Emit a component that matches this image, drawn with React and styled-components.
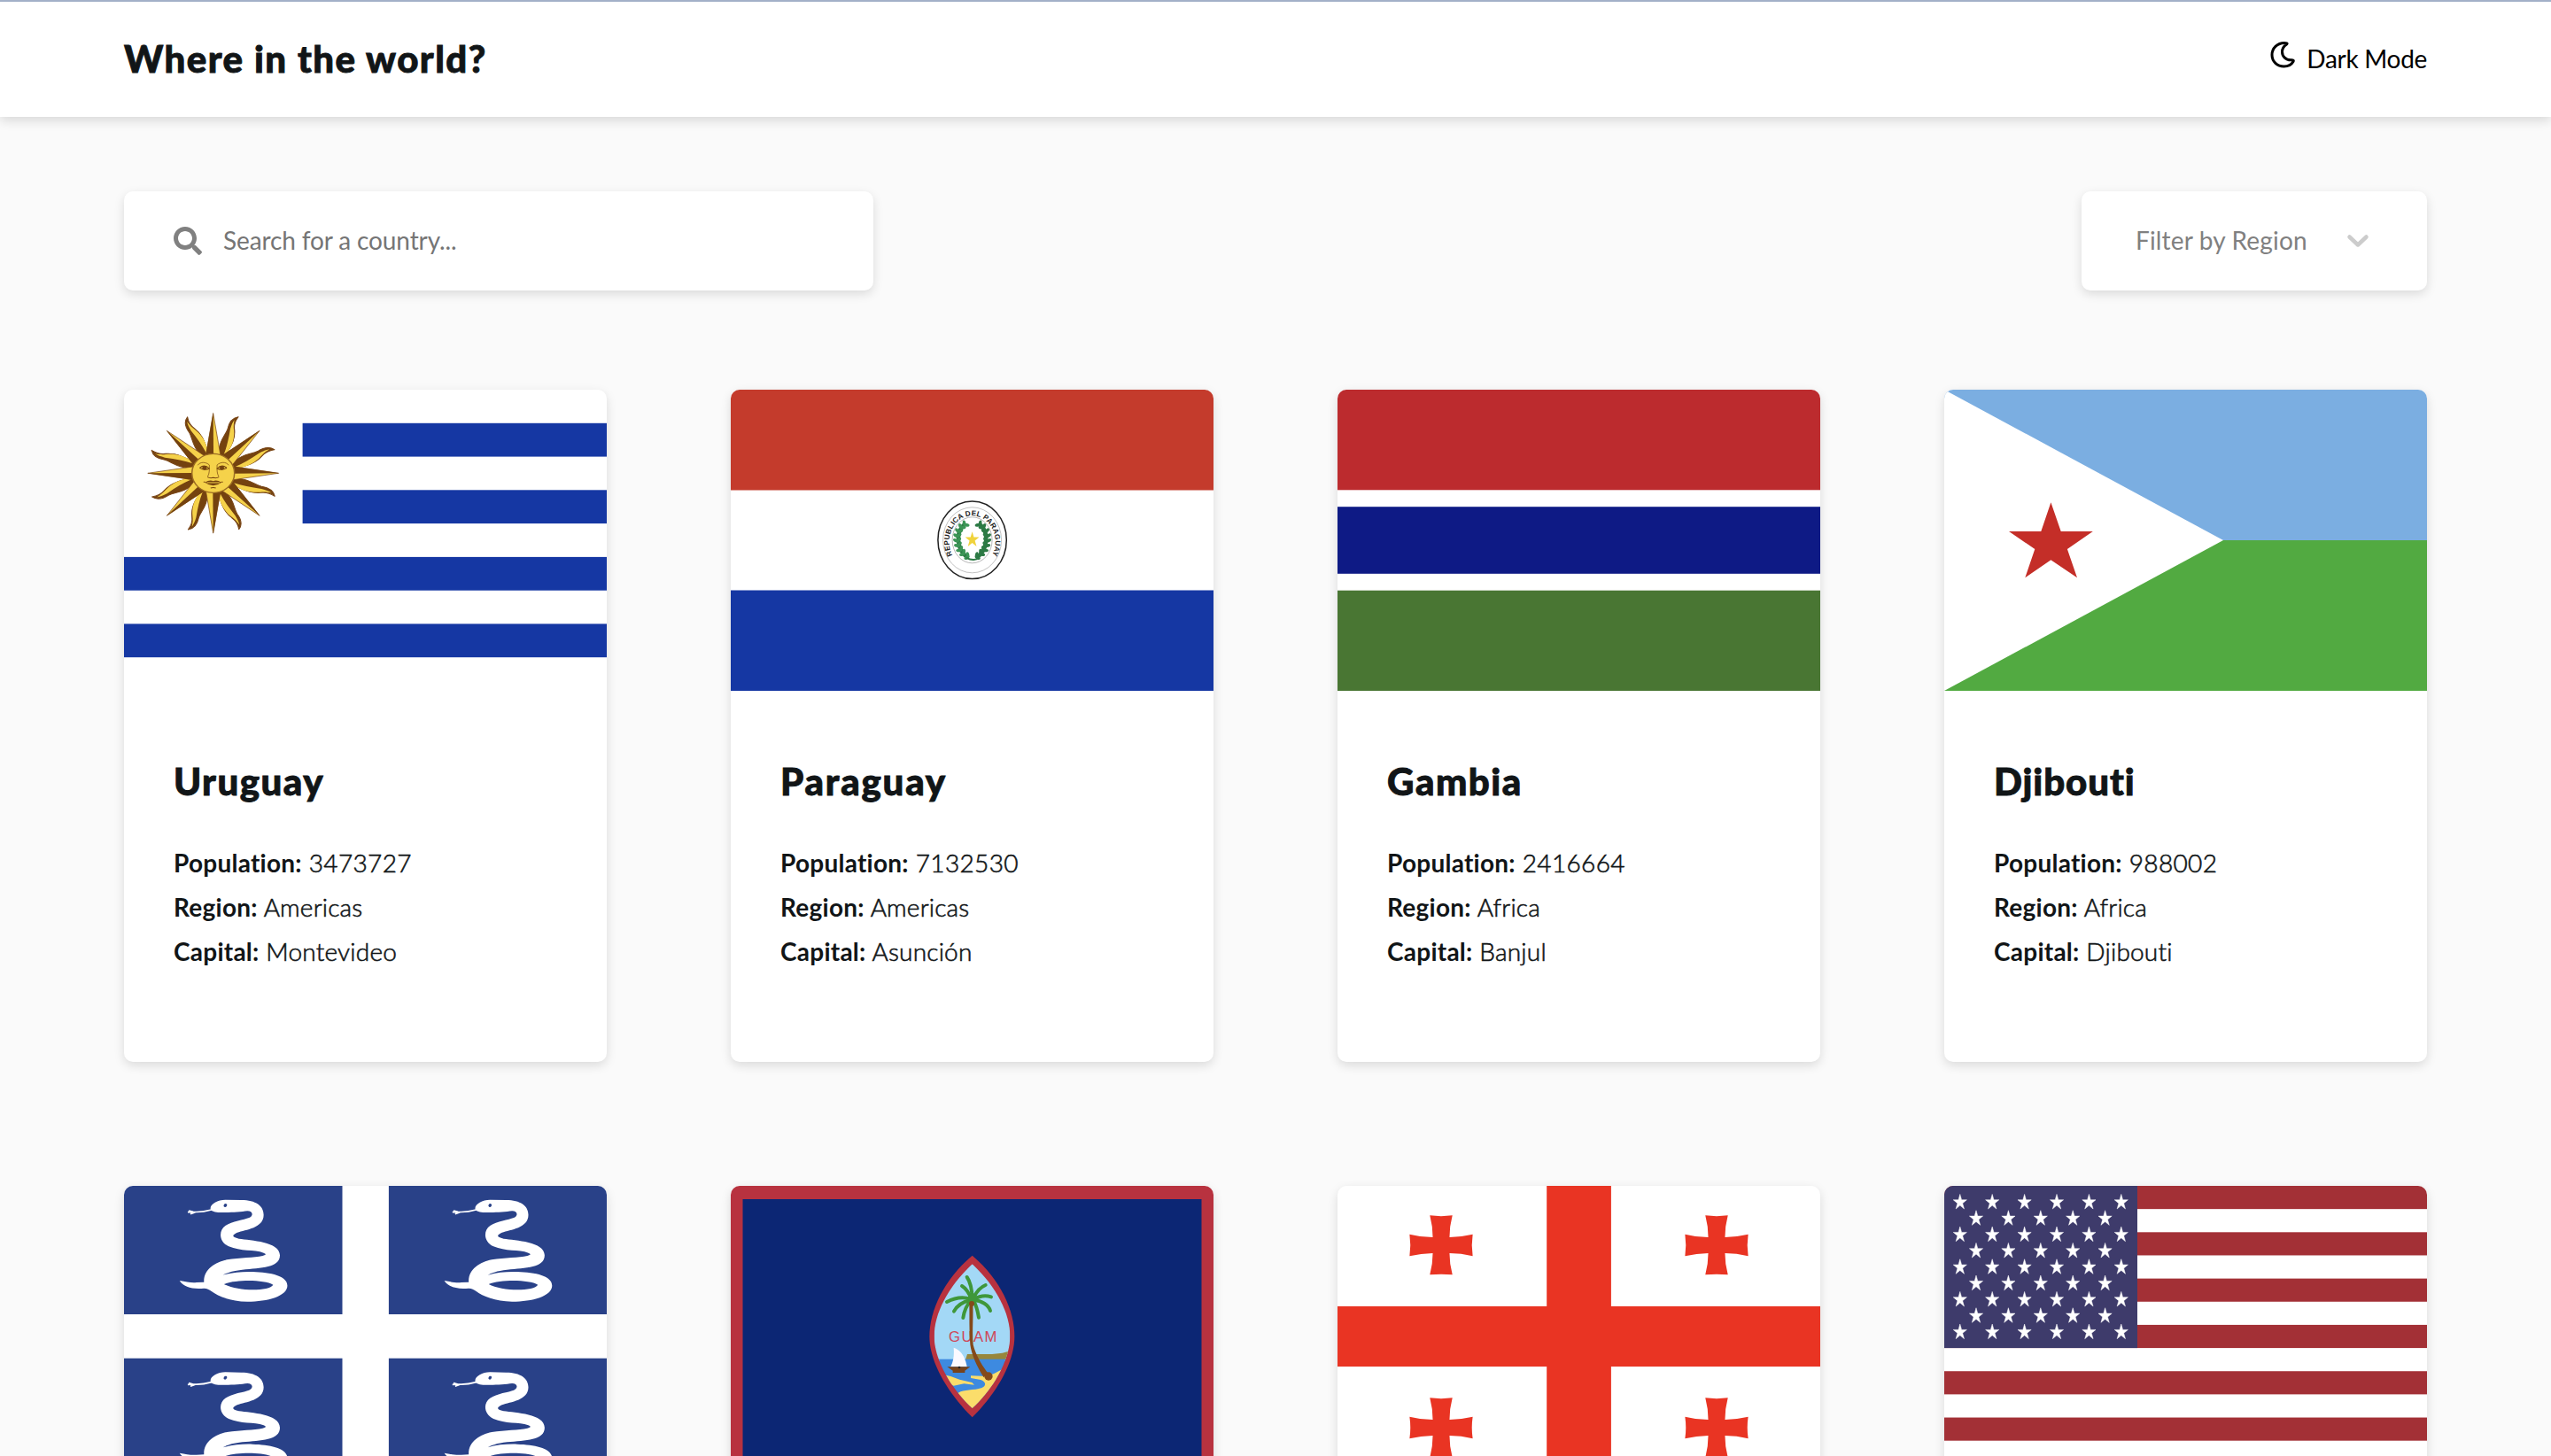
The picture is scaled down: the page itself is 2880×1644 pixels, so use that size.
import React from "react";
import styled, { createGlobalStyle } from "styled-components";
import { FaSearch } from "react-icons/fa";

const GlobalStyle = createGlobalStyle`
  * { box-sizing: border-box; }
  body {
    margin: 0;
    height: 1644px;
    overflow: hidden;
    background: #fafafa;
    color: #111517;
    font-family: Lato, "Open Sans", sans-serif;
    font-size: 28px;
    font-variant-ligatures: none;
  }
`;

const shadow = "0 4px 12px rgba(0, 0, 0, 0.13)";

const Page = styled.div`
  height: 1644px;
  overflow: hidden;
`;

const Header = styled.header`
  display: flex;
  align-items: center;
  justify-content: space-between;
  height: 132px;
  padding: 0 140px 2px;
  background: #fff;
  border-top: 2px solid #a3b0c8;
  box-shadow: 0 4px 12px rgba(0, 0, 0, 0.14);
`;

const Title = styled.h1`
  margin: 0;
  font-size: 42px;
  line-height: 56px;
  font-weight: 900;
  letter-spacing: 1.45px;
  -webkit-text-stroke: 0.9px currentColor;
  white-space: nowrap;
`;

const ThemeToggle = styled.button`
  display: flex;
  align-items: center;
  gap: 14px;
  padding: 0;
  border: 0;
  background: none;
  color: #000;
  font: inherit;
  line-height: 38px;
  letter-spacing: -0.3px;
`;

const MoonIcon = styled.svg`
  width: 28px;
  height: 30px;
  margin: 0 -1px 8px 1px;
`;

const Main = styled.main`
  padding: 84px 140px 0;
`;

const Toolbar = styled.div`
  display: flex;
  justify-content: space-between;
  margin-bottom: 112px;
`;

const Field = styled.div`
  display: flex;
  align-items: center;
  height: 112px;
  background: #fff;
  border-radius: 10px;
  box-shadow: ${shadow};
`;

const SearchField = styled(Field)`
  width: 846px;
  padding-left: 56px;
  gap: 24px;
  color: #808080;
`;

const SearchInput = styled.input`
  flex: 1;
  padding: 0 0 2px;
  border: 0;
  outline: 0;
  background: none;
  font: inherit;
  letter-spacing: -0.12px;
  &::placeholder { color: #757575; opacity: 1; }
`;

const RegionSelect = styled(Field)`
  width: 390px;
  padding: 0 65px 0 61px;
  justify-content: space-between;
  color: #808080;
  letter-spacing: 0.17px;
  white-space: nowrap;
`;

const RegionLabel = styled.span`
  padding-bottom: 2px;
`;

const Chevron = styled.svg`
  width: 26px;
  height: 16px;
`;

const Grid = styled.div`
  display: grid;
  grid-template-columns: repeat(4, 545px);
  gap: 140px;
`;

const Card = styled.article`
  height: 759px;
  background: #fff;
  border-radius: 10px;
  box-shadow: ${shadow};
  overflow: hidden;
`;

const Flag = styled.svg`
  display: block;
  width: 545px;
  height: 340px;
`;

const Details = styled.div`
  padding: 73px 56px 0;
`;

const Name = styled.h2`
  margin: 0 0 38px;
  font-size: 42px;
  line-height: 58px;
  font-weight: 900;
  letter-spacing: ${(p) => p.$tracking}px;
  -webkit-text-stroke: 0.9px currentColor;
`;

const Fact = styled.p`
  margin: 0;
  font-size: 28px;
  line-height: 50px;
  font-weight: 300;
  letter-spacing: ${(p) => (p.$numeric ? 0.35 : 0.2)}px;
  -webkit-text-stroke: 0.6px currentColor;
`;

const Label = styled.span`
  font-weight: 700;
  letter-spacing: 0.25px;
  -webkit-text-stroke: 0;
`;

const starPoints = (cx, cy, rx, ry) =>
  Array.from({ length: 10 }, (_, i) => {
    const a = (Math.PI / 5) * i - Math.PI / 2;
    const k = i % 2 ? 0.382 : 1;
    return `${(cx + rx * k * Math.cos(a)).toFixed(2)},${(cy + ry * k * Math.sin(a)).toFixed(2)}`;
  }).join(" ");

const turns = [0, 45, 90, 135, 180, 225, 270, 315];

function Uruguay() {
  return (
    <Flag viewBox="0 0 545 340">
      <g fill="#1537a3">
        <rect x="201.6" y="37.8" width="343.4" height="37.8" />
        <rect x="201.6" y="113.3" width="343.4" height="37.8" />
        <rect y="188.9" width="545" height="37.8" />
        <rect y="264.4" width="545" height="37.8" />
      </g>
      <g transform="translate(100.7 94.3) scale(.3636 .3333)">
        {turns.map((t) => (
          <g key={t} transform={`rotate(${t})`} stroke="#7a4617" strokeWidth="3" strokeLinejoin="round">
            <path fill="#74420f" d="M17-62C16-108 38-128 45-150C49-172 60-188 78-191C67-176 64-163 66-148C69-120 61-94 34-58Z" />
            <path fill="#f5d24a" stroke="none" d="M33-64C42-88 48-116 53-150C57-164 60-172 66-181C63-166 63-156 64-147C67-118 60-92 42-66Z" />
          </g>
        ))}
        {turns.map((t) => (
          <g key={t} transform={`rotate(${t})`}>
            <path fill="#f5d24a" stroke="#7a4617" strokeWidth="2" d="M0-203L23-58H-23Z" />
            <path fill="#74420f" d="M0-207L1-58H-24Z" />
          </g>
        ))}
        <circle r="66" fill="#f5d24a" stroke="#9a6a22" strokeWidth="4" />
        <g fill="none" stroke="#74420f" strokeWidth="3">
          <path d="M-48-27C-40-40-22-38-12-28C-12-12-11 0-17 11M48-27C40-40 22-38 12-28C12-12 11 0 17 11" strokeWidth="2" />
          <path d="M-42-18Q-27-32-12-16Q-27-8-42-18M42-18Q27-32 12-16Q27-8 42-18M-18 13Q-10 18 0 15Q10 18 18 13" />
          <path d="M-30 30H-25M30 30H25M-8 50Q0 47 8 50" />
        </g>
        <path fill="#74420f" d="M-26 31Q-10 21 0 27Q10 21 26 31Q0 52-26 31" />
        <path stroke="#f5d24a" strokeWidth="3" d="M-20 32H20" />
        <circle cx="-27" cy="-18" r="7" fill="#74420f" />
        <circle cx="27" cy="-18" r="7" fill="#74420f" />
      </g>
    </Flag>
  );
}

const leaves = [
  [-26, -52, 45], [-38, -42, 30], [-47, -28, 15], [-51, -12, 0], [-51, 4, -8],
  [-47, 20, -20], [-40, 35, -35], [-29, 47, -50], [-14, 57, -65],
];

function Paraguay() {
  return (
    <Flag viewBox="0 0 545 340">
      <rect width="545" height="113.5" fill="#c43b2c" />
      <rect y="226.5" width="545" height="113.5" fill="#1537a3" />
      <g transform="translate(272.6 169.8)">
        <ellipse rx="38.7" ry="43.8" fill="#fff" stroke="#222" strokeWidth="1.5" />
        <ellipse rx="33" ry="37" fill="none" stroke="#999" strokeWidth=".6" />
        <ellipse rx="22.5" ry="26" fill="none" stroke="#999" strokeWidth=".7" />
        <path id="motto" d="M-22.3 17A26 29.5 0 1 1 22.3 17" fill="none" />
        <text fontFamily="Liberation Sans, sans-serif" fontWeight="700" fontSize="8.2" fill="#222">
          <textPath href="#motto" textLength="118" lengthAdjust="spacing">REPUBLICA DEL PARAGUAY</textPath>
        </text>
        <g transform="scale(.3333)">
          {[1, -1].map((s) => (
            <g key={s} transform={`scale(${s} 1)`}>
              <path d="M-25-54C-56-30-56 30-15 60" fill="none" stroke="#2d7a45" strokeWidth="14" />
              {leaves.map(([x, y, r]) => (
                <g key={y} transform={`translate(${x} ${y}) rotate(${r})`} fill={s > 0 ? "#3c9556" : "#2d7a45"}>
                  <ellipse cx="-5" rx="10" ry="5.5" transform="rotate(35)" />
                  <ellipse cx="7" rx="10" ry="5.5" transform="rotate(-35)" />
                </g>
              ))}
            </g>
          ))}
          <path d="M-20 60Q0 70 18 64" fill="none" stroke="#2d7a45" strokeWidth="6" />
          <polygon points={starPoints(0, -1, 25, 28)} fill="#f0d33c" />
        </g>
      </g>
    </Flag>
  );
}

function Gambia() {
  return (
    <Flag viewBox="0 0 545 340">
      <rect width="545" height="113.3" fill="#bc2b2e" />
      <rect y="132.2" width="545" height="75.6" fill="#0e1a85" />
      <rect y="226.7" width="545" height="113.3" fill="#497633" />
    </Flag>
  );
}

function Djibouti() {
  return (
    <Flag viewBox="0 0 545 340">
      <rect width="545" height="170" fill="#7baee1" />
      <rect y="170" width="545" height="170" fill="#52aa41" />
      <path fill="#fff" d="M0 0L315 170L0 340Z" />
      <polygon
        fill="#c42e28"
        points="120.4,127.3 131.7,160 167.8,160 138.9,180 150,212.3 120.4,192.3 91.3,212.3 102.3,180 73,160 109.3,160"
      />
    </Flag>
  );
}

function Snake({ x, y }) {
  return (
    <g transform={`translate(${x} ${y})`}>
      <path
        fill="#fff"
        fillRule="evenodd"
        d="M282 138C276 122 300 104 325 104L372 105C415 105 438 125 438 155C438 200 385 205 360 215C345 223 342 230 365 236C400 242 486 245 486 292C486 335 430 335 375 341C345 345 328 352 318 359C345 350 375 347 405 348C460 350 508 362 508 395C508 430 450 449 390 449C340 449 303 430 285 415C276 408 272 404 262 404C228 408 202 400 190 378C210 382 225 386 240 384L262 383C260 340 295 315 330 307C370 300 410 300 435 294C446 291 446 288 438 284C410 272 370 280 335 262C305 246 305 207 325 192C345 176 380 172 395 165C410 157 405 142 390 142C370 145 340 148 315 147C300 147 288 146 282 138ZM321 390C355 374 440 374 466 392C455 415 360 415 321 390Z"
      />
      <path fill="none" stroke="#fff" strokeWidth="5" d="M284 138C265 144 250 147 230 145L214 146M236 146L222 152M230 145L217 141" />
      <ellipse cx="325" cy="123" rx="4.5" ry="6" fill="#294188" transform="rotate(25 325 123)" />
    </g>
  );
}

function Martinique() {
  return (
    <Flag viewBox="0 0 545 340">
      <g fill="#294188">
        <rect width="246.5" height="145" />
        <rect x="298.9" width="246.1" height="145" />
        <rect y="194.7" width="246.5" height="145.3" />
        <rect x="298.9" y="194.7" width="246.1" height="145.3" />
      </g>
      <g transform="scale(.38265 .33333) translate(-26 -57)">
        <Snake x={0} y={0} />
        <Snake x={781} y={0} />
        <Snake x={0} y={584} />
        <Snake x={781} y={584} />
      </g>
    </Flag>
  );
}

function Guam() {
  return (
    <Flag viewBox="0 0 545 340">
      <rect width="545" height="340" fill="#b8323f" />
      <rect x="13.5" y="15" width="518" height="310" fill="#0c2674" />
      <g transform="translate(195 51) scale(.33333)">
        <clipPath id="seal">
          <path d="M233 112C316 190 361 280 361 357C361 430 310 530 233 600C156 530 104 430 104 357C104 280 150 190 233 112Z" />
        </clipPath>
        <path fill="#b8323f" d="M233 83C330 165 376 270 376 357C376 445 315 550 233 631C151 550 88 445 88 357C88 270 136 165 233 83Z" />
        <g clipPath="url(#seal)">
          <rect x="80" y="100" width="300" height="340" fill="#a3d8f6" />
          <path fill="#97863c" d="M210 436L216 417H300L335 413L365 405V436Z" />
          <rect x="80" y="434" width="300" height="180" fill="#3d8ae0" />
          <path fill="#fbdd6b" d="M375 440L335 468L308 482L285 492L228 490L228 498L262 504C284 512 280 530 255 534C225 540 195 538 180 552L170 620H300L390 500Z" />
          <path fill="#fbdd6b" d="M130 485L160 492L190 503L232 513L240 521L205 517L170 524L140 510Z" />
        </g>
        <text x="153" y="374" textLength="163" lengthAdjust="spacing" fontFamily="Liberation Sans, sans-serif" fontSize="50" fill="#cf4658">GUAM</text>
        <path fill="#fbf9ff" d="M170 395C195 402 210 430 215 459H160C170 440 172 420 170 395Z" />
        <path fill="#77431c" d="M148 460H226L208 473V480H167V473Z" />
        <circle cx="189" cy="462" r="4" fill="#222" />
        <path fill="#84491a" d="M223 240H235C237 300 232 345 236 385C246 425 270 460 285 480L272 496C250 460 232 425 226 385C222 340 224 290 223 240Z" />
        <circle cx="288" cy="492" r="14" fill="#84491a" />
        <g fill="none" stroke="#3f973a" strokeWidth="12" strokeLinecap="round">
          <path d="M233 230C232 195 225 170 215 156" />
          <path d="M230 230C220 205 208 192 198 186" />
          <path d="M238 225C250 200 265 188 278 183" />
          <path d="M238 232C260 218 280 218 297 223" />
          <path d="M238 234C265 236 288 250 294 270" />
          <path d="M238 238C248 255 252 275 255 293" />
          <path d="M228 236C210 255 205 275 202 294" />
          <path d="M226 234C200 240 180 255 171 272" />
          <path d="M226 230C195 220 170 228 147 240" />
        </g>
        <circle cx="234" cy="226" r="15" fill="#3f973a" />
        <circle cx="231" cy="246" r="9" fill="#84491a" />
      </g>
    </Flag>
  );
}

const crosses = [[117, 67], [428, 67], [117, 273], [428, 273]];

function Georgia() {
  return (
    <Flag viewBox="0 0 545 340">
      <g fill="#e93423">
        <rect x="236.2" width="72.7" height="340" />
        <rect y="136" width="545" height="68" />
        {crosses.map(([x, y]) => (
          <path
            key={`${x}-${y}`}
            transform={`translate(${x} ${y}) scale(.3636 .3333)`}
            d="M-35-101Q0-96 35-101Q26-64 26-27Q62-28 98-37Q93 0 98 37Q62 27 26 27Q26 64 35 100Q0 96-35 100Q-26 64-26 27Q-62 28-98 37Q-93 0-98-37Q-62-27-26-27Q-26-64-35-101Z"
          />
        ))}
      </g>
    </Flag>
  );
}

function UnitedStates() {
  const stripe = 340 / 13;
  const stars = [];
  for (let r = 0; r < 9; r++) {
    for (let c = 0; c < (r % 2 ? 5 : 6); c++) {
      stars.push([17.8 + (r % 2 ? 18.2 : 0) + c * 36.4, 18.6 + r * 18.33]);
    }
  }
  return (
    <Flag viewBox="0 0 545 340">
      {[0, 2, 4, 6, 8, 10, 12].map((i) => (
        <rect key={i} y={i * stripe} width="545" height={stripe} fill="#a33036" />
      ))}
      <rect width="218" height={stripe * 7} fill="#3e3b6b" />
      {stars.map(([x, y]) => (
        <polygon
          key={`${x}-${y}`}
          points={starPoints(x, y, 8, 9.2)}
          fill="#fff"
          stroke="#fff"
          strokeOpacity=".6"
          strokeWidth=".8"
        />
      ))}
    </Flag>
  );
}

const countries = [
  { name: "Uruguay", tracking: 1.5, population: "3473727", region: "Americas", capital: "Montevideo", flag: Uruguay },
  { name: "Paraguay", tracking: 1.8, population: "7132530", region: "Americas", capital: "Asunción", flag: Paraguay },
  { name: "Gambia", tracking: 1.5, population: "2416664", region: "Africa", capital: "Banjul", flag: Gambia },
  { name: "Djibouti", tracking: 0.9, population: "988002", region: "Africa", capital: "Djibouti", flag: Djibouti },
];

const flagsBelow = [Martinique, Guam, Georgia, UnitedStates];

export default function App() {
  return (
    <Page>
      <GlobalStyle />
      <Header>
        <Title>Where in the world?</Title>
        <ThemeToggle>
          <MoonIcon viewBox="0 0 28 30" fill="none" stroke="#000" strokeWidth="3" strokeLinejoin="round">
            <path d="M18.500 3C20 1.800 18.500 1.500 16 1.500C8 1.500 2 7.500 2 15C2 22.500 8 28 15.500 28C20 28 24 26 26 22.500C26.800 21 25.500 20.500 23.500 20.800C17.500 21 13.500 16.500 13.500 11.500C13.500 8 15.500 5 18.500 3Z" />
          </MoonIcon>
          Dark Mode
        </ThemeToggle>
      </Header>
      <Main>
        <Toolbar>
          <SearchField>
            <FaSearch size={32} />
            <SearchInput placeholder="Search for a country..." />
          </SearchField>
          <RegionSelect>
            <RegionLabel>Filter by Region</RegionLabel>
            <Chevron viewBox="0 0 26 16" fill="none" stroke="#ccc" strokeWidth="4.5" strokeLinecap="round" strokeLinejoin="round">
              <path d="M3.5 3.5L13 12.5L22.5 3.5" />
            </Chevron>
          </RegionSelect>
        </Toolbar>
        <Grid>
          {countries.map(({ name, tracking, population, region, capital, flag: Picture }) => (
            <Card key={name}>
              <Picture />
              <Details>
                <Name $tracking={tracking}>{name}</Name>
                <Fact $numeric><Label>Population:</Label> {population}</Fact>
                <Fact><Label>Region:</Label> {region}</Fact>
                <Fact><Label>Capital:</Label> {capital}</Fact>
              </Details>
            </Card>
          ))}
          {flagsBelow.map((Picture, i) => (
            <Card key={i}>
              <Picture />
            </Card>
          ))}
        </Grid>
      </Main>
    </Page>
  );
}
